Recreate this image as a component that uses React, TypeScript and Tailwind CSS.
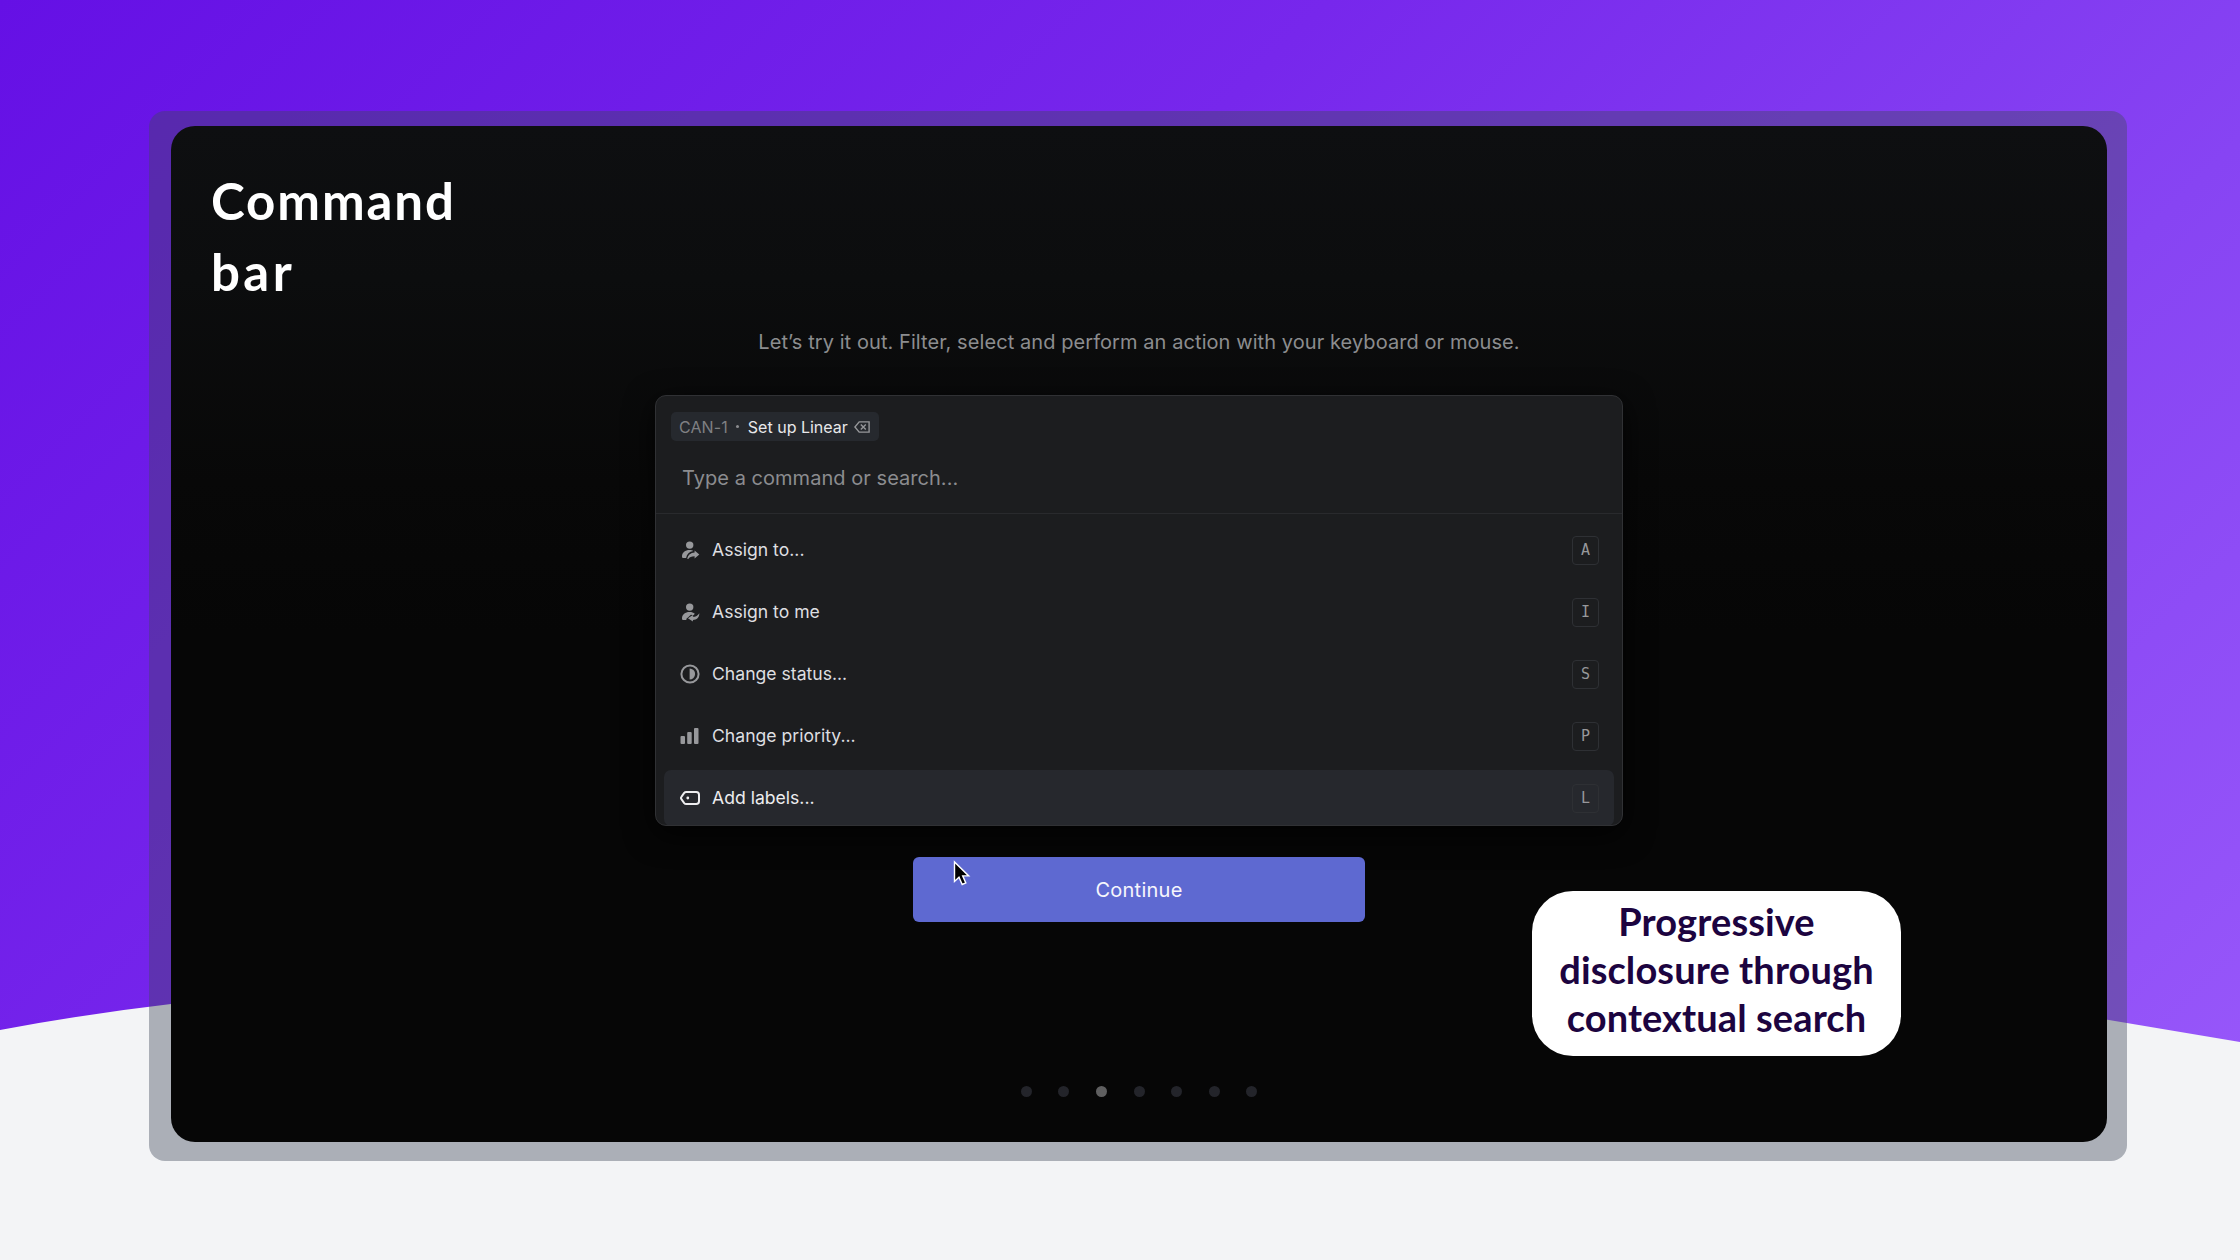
import React from "react";

type IconProps = { className?: string };

const AssignIcon = ({ className }: IconProps) => (
  <svg viewBox="0 0 20 20" className={className} fill="currentColor">
    <circle cx="9.7" cy="5.1" r="3.7" />
    <path d="M2 16.4C2 12.6 5.2 10.1 9.5 10.1c1.7 0 2.9.3 3.7.9-3.900.6-6.300 3-7.100 7H3.600c-1 0-1.600-.6-1.600-1.600z" />
    <path d="M7.300 19c.6-4 3.300-6.200 7.300-6.500v-2.100l4.700 4.100-4.700 3.900v-2.100c-3.100 0-5.300.8-6.300 2.700z" />
  </svg>
);

const AssignMeIcon = ({ className }: IconProps) => (
  <svg viewBox="0 0 20 20" className={className} fill="currentColor">
    <circle cx="9.7" cy="5.1" r="3.7" />
    <path d="M2 16.400C2 12.600 5.200 10.100 9.500 10.100c2.300 0 4 .6 5.300 1.700l-1.200 1.400-2.700-.5-4.700 4.200.3 1.100H3.600c-1 0-1.600-.6-1.600-1.600z" />
    <path d="M19.400 11.200c-.2 4.400-2.700 6.600-6.500 6.700v1.700l-5-3.400 5-3.300v1.900c2.900 0 4.900-1.100 6.500-3.600z" />
  </svg>
);

const StatusIcon = ({ className }: IconProps) => (
  <svg viewBox="0 0 20 20" className={className}>
    <circle cx="10" cy="10" r="8.600" fill="none" stroke="currentColor" strokeWidth="2" />
    <path d="M9.600 4.500a5.500 5.500 0 0 1 0 11z" fill="currentColor" />
  </svg>
);

const PriorityIcon = ({ className }: IconProps) => (
  <svg viewBox="0 0 20 20" className={className} fill="currentColor">
    <rect x="0.500" y="10" width="4.500" height="8" rx="1" />
    <rect x="7.200" y="6" width="4.500" height="12" rx="1" />
    <rect x="14" y="2" width="4.500" height="16" rx="1" />
  </svg>
);

const LabelIcon = ({ className }: IconProps) => (
  <svg viewBox="0 0 20 20" className={className}>
    <path
      d="M6.200 4h10a2.800 2.800 0 0 1 2.800 2.800v6.400a2.800 2.800 0 0 1-2.800 2.800h-10c-.8 0-1.500-.3-2-.9L1.600 11.400a2.100 2.100 0 0 1 0-2.800L4.200 4.900c.5-.6 1.200-.9 2-.9z"
      fill="none"
      stroke="currentColor"
      strokeWidth="2"
    />
    <circle cx="7.800" cy="10" r="1.400" fill="currentColor" />
  </svg>
);

const BackspaceIcon = ({ className }: IconProps) => (
  <svg viewBox="0 0 16 12" className={className} fill="none" stroke="currentColor" strokeWidth="1.400">
    <path d="M5.200.9h9.900v10.200H5.200L.9 6z" />
    <path d="M6.800 3.500l5 5M11.800 3.500l-5 5" />
  </svg>
);

const commands = [
  { label: "Assign to...", hint: "A", Icon: AssignIcon },
  { label: "Assign to me", hint: "I", Icon: AssignMeIcon },
  { label: "Change status...", hint: "S", Icon: StatusIcon },
  { label: "Change priority...", hint: "P", Icon: PriorityIcon },
  { label: "Add labels...", hint: "L", Icon: LabelIcon, active: true },
];

function Backdrop() {
  return (
    <svg className="absolute inset-0 h-full w-full" viewBox="0 0 2240 1260">
      <path
        d="M0 1030Q85 1014 171 1004C700 938 1550 928 2106 1019.500L2240 1042V1260H0z"
        fill="#f3f4f6"
      />
    </svg>
  );
}

function Palette() {
  return (
    <section className="h-[431px] w-[968px] overflow-hidden rounded-[11px] border border-[#303134] bg-[#1c1d1f] shadow-[0_8px_30px_rgba(0,0,0,0.8)]">
      <header className="h-[118px] border-b border-[#292a2d] pl-[15px] pt-4">
        <div className="flex h-[29px] w-[208px] items-center rounded-[5px] bg-[#26292e] pl-[8px] text-[16px] leading-none">
          <span className="tracking-[0.1px] text-[#7f8083]">CAN-1</span>
          <span className="ml-[8px] mr-[9px] h-[3px] w-[3px] rounded-full bg-[#8b8c8f]" />
          <span className="text-[#e8e8ea]">Set up Linear</span>
          <BackspaceIcon className="ml-[6px] h-3 w-4 text-[#96979a]" />
        </div>
        <div className="mt-[23px] pl-[11px] text-[20px] leading-7 tracking-[0.04px] text-[#8b8c8f]">
          Type a command or search...
        </div>
      </header>
      <ul className="flex flex-col gap-[6px] px-2 pt-[8px]">
        {commands.map(({ label, hint, Icon, active }) => (
          <li
            key={label}
            className={`flex h-[56px] shrink-0 items-center rounded-[7px] px-4 text-[17.600px] ${
              active ? "bg-[#26282d] text-[#ededef]" : "text-[#dedfe1]"
            }`}
          >
            <Icon className={`mr-3 h-5 w-5 ${active ? "text-[#ededef]" : "text-[#97989b]"}`} />
            <span className="pt-px">{label}</span>
            <kbd className="ml-auto mr-[-1px] flex h-[29px] w-[27px] items-center justify-center rounded-[4px] border border-[#2e3034] font-['DejaVu_Sans_Mono',monospace] text-[15px] text-[#97989b]">
              {hint}
            </kbd>
          </li>
        ))}
      </ul>
    </section>
  );
}

function Cursor() {
  return (
    <svg className="absolute left-[40px] top-[3px] h-[27px] w-[18px]" viewBox="0 0 18 27">
      <path
        d="M1.500 2v19.500l4.500-4.200 3.200 7.200 3.600-1.600-3.100-7h6z"
        fill="#000"
        stroke="#fff"
        strokeWidth="1.400"
      />
    </svg>
  );
}

export default function App() {
  return (
    <div className="relative h-[1260px] w-[2240px] overflow-hidden bg-[linear-gradient(135deg,#6510e5_0%,#7727ec_38%,#8744f3_68%,#9a5afb_100%)] font-['Inter',sans-serif]">
      <Backdrop />
      <div className="relative ml-[149px] mt-[111px] h-[1050px] w-[1978px] rounded-[16px] bg-[#3f485b]/40 pl-[22px] pt-[15px]">
        <main className="relative flex h-[1016px] w-[1936px] flex-col items-center rounded-[24px] bg-[linear-gradient(180deg,#0e0f11_0%,#0c0d0e_15%,#080808_35%,#060606_50%)]">
          <h1 className="ml-[40px] mt-[39px] w-[300px] self-start font-['Lato',sans-serif] text-[51px] font-bold leading-[71px] tracking-[1.9px] text-white">
            Command
            <br />
            <span className="tracking-[3.4px]">bar</span>
          </h1>
          <p className="mt-[21px] text-[20px] leading-[28px] tracking-[0.075px] text-[#8c8d8f]">
            Let’s try it out. Filter, select and perform an action with your keyboard or mouse.
          </p>
          <div className="mt-[39px]">
            <Palette />
          </div>
          <button className="relative mt-[31px] h-[65px] w-[452px] rounded-[6px] bg-[#5e69d1] text-[20px] tracking-[0.25px] text-[#f6f6fc]">
            Continue
            <Cursor />
          </button>
          <nav className="mt-[164px] flex gap-[26.670px]">
            {[0, 1, 2, 3, 4, 5, 6].map((i) => (
              <span key={i} className={`h-[11px] w-[11px] rounded-full ${i === 2 ? "bg-[#5f5f60]" : "bg-[#23242a]"}`} />
            ))}
          </nav>
          <aside className="absolute left-[1361px] top-[765px] flex h-[165px] w-[369px] justify-center rounded-[41px] bg-white pt-[6px] text-center font-['Lato',sans-serif] text-[38px] font-bold leading-[48px] tracking-[0.1px] text-[#1c0440]">
            <p>
              Progressive
              <br />
              disclosure through
              <br />
              contextual search
            </p>
          </aside>
        </main>
      </div>
    </div>
  );
}
